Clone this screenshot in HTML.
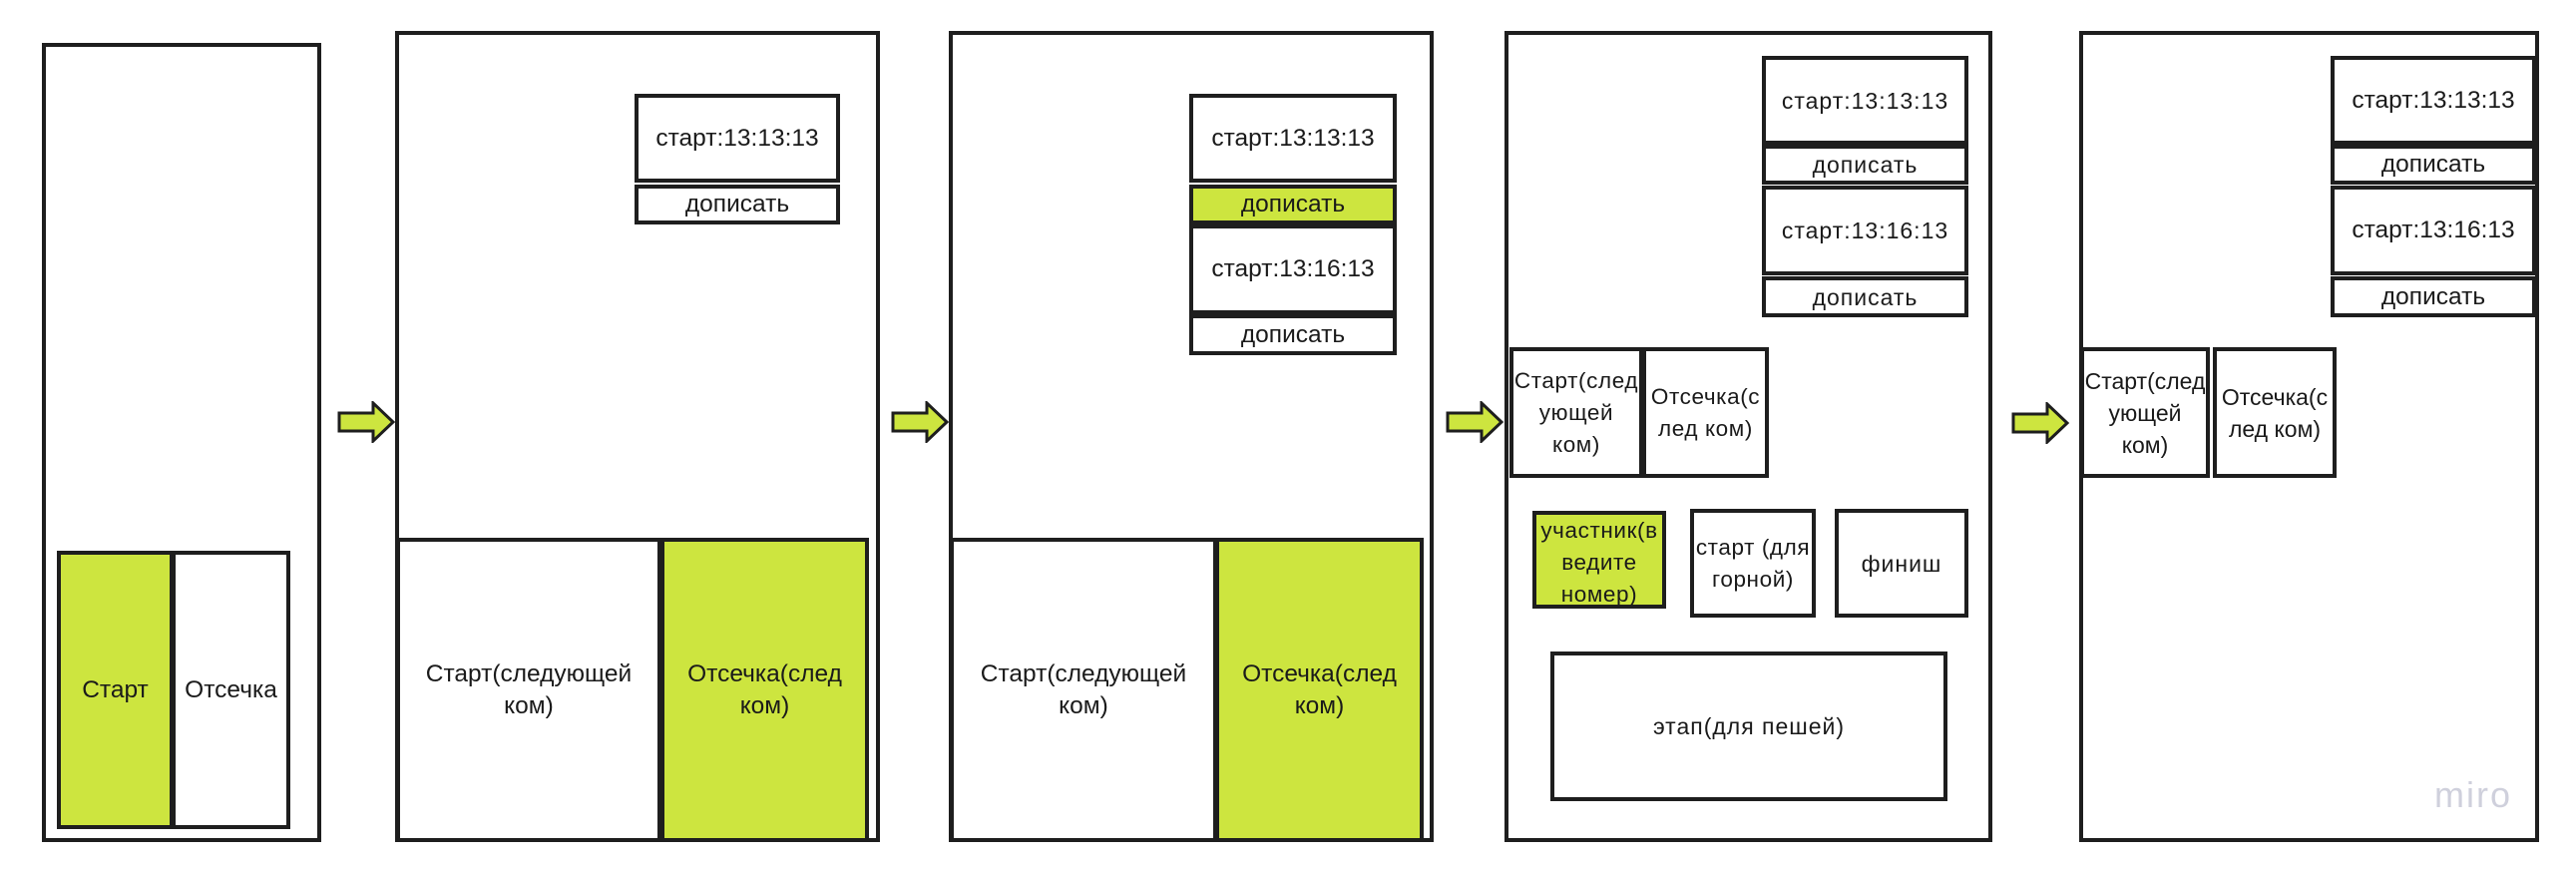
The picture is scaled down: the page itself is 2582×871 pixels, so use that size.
<!DOCTYPE html>
<html><head><meta charset="utf-8"><style>
html,body{margin:0;padding:0;background:#fff;}
body{width:2582px;height:871px;position:relative;overflow:hidden;font-family:"Liberation Sans","DejaVu Sans",sans-serif;color:#1a1a1a;}
.b{position:absolute;box-sizing:border-box;border:4px solid #1e1e1e;background:#fff;display:flex;align-items:center;justify-content:center;text-align:center;font-size:24.5px;line-height:32px;overflow:hidden;white-space:nowrap;}
.g{background:#cde53f;}
.w{font-size:23px;letter-spacing:1px;}
.s{font-size:22.5px;letter-spacing:0.6px;}
svg{position:absolute;}
</style></head><body>
<div class="b" style="left:42px;top:43px;width:280px;height:801px"></div>
<div class="b g" style="left:57px;top:552px;width:117px;height:279px">Старт</div>
<div class="b" style="left:172px;top:552px;width:119px;height:279px">Отсечка</div>

<svg style="left:338px;top:402px" width="60" height="42" viewBox="0 0 60 42"><polygon points="2,12 36,12 36,2 56,21 36,40 36,30 2,30" fill="#cde53f" stroke="#1e1e1e" stroke-width="3"/></svg>

<div class="b" style="left:396px;top:31px;width:486px;height:813px"></div>
<div class="b" style="left:636px;top:94px;width:206px;height:89px">старт:13:13:13</div>
<div class="b" style="left:636px;top:185px;width:206px;height:40px">дописать</div>
<div class="b" style="left:397px;top:539px;width:266px;height:305px">Старт(следующей<br>ком)</div>
<div class="b g" style="left:662px;top:539px;width:209px;height:305px">Отсечка(след<br>ком)</div>

<svg style="left:893px;top:402px" width="60" height="42" viewBox="0 0 60 42"><polygon points="2,12 36,12 36,2 56,21 36,40 36,30 2,30" fill="#cde53f" stroke="#1e1e1e" stroke-width="3"/></svg>

<div class="b" style="left:951px;top:31px;width:486px;height:813px"></div>
<div class="b" style="left:1192px;top:94px;width:208px;height:89px">старт:13:13:13</div>
<div class="b g" style="left:1192px;top:185px;width:208px;height:40px">дописать</div>
<div class="b" style="left:1192px;top:225px;width:208px;height:90px">старт:13:16:13</div>
<div class="b" style="left:1192px;top:315px;width:208px;height:41px">дописать</div>
<div class="b" style="left:952px;top:539px;width:268px;height:305px">Старт(следующей<br>ком)</div>
<div class="b g" style="left:1218px;top:539px;width:209px;height:305px">Отсечка(след<br>ком)</div>

<svg style="left:1449px;top:402px" width="60" height="42" viewBox="0 0 60 42"><polygon points="2,12 36,12 36,2 56,21 36,40 36,30 2,30" fill="#cde53f" stroke="#1e1e1e" stroke-width="3"/></svg>

<div class="b" style="left:1508px;top:31px;width:489px;height:813px"></div>
<div class="b w" style="left:1766px;top:56px;width:207px;height:89px">старт:13:13:13</div>
<div class="b w" style="left:1766px;top:145px;width:207px;height:40px">дописать</div>
<div class="b w" style="left:1766px;top:186px;width:207px;height:90px">старт:13:16:13</div>
<div class="b w" style="left:1766px;top:277px;width:207px;height:41px">дописать</div>
<div class="b s" style="left:1513px;top:348px;width:134px;height:131px">Старт(след<br>ующей<br>ком)</div>
<div class="b s" style="left:1646px;top:348px;width:127px;height:131px">Отсечка(с<br>лед ком)</div>
<div class="b g s" style="left:1536px;top:512px;width:134px;height:98px;align-items:flex-start">участник(в<br>ведите<br>номер)</div>
<div class="b s" style="left:1694px;top:510px;width:126px;height:109px">старт (для<br>горной)</div>
<div class="b w" style="left:1839px;top:510px;width:134px;height:109px">финиш</div>
<div class="b w" style="left:1554px;top:653px;width:398px;height:150px">этап(для пешей)</div>

<svg style="left:2016px;top:403px" width="60" height="42" viewBox="0 0 60 42"><polygon points="2,12 36,12 36,2 56,21 36,40 36,30 2,30" fill="#cde53f" stroke="#1e1e1e" stroke-width="3"/></svg>

<div class="b" style="left:2084px;top:31px;width:461px;height:813px"></div>
<div class="b" style="left:2336px;top:56px;width:206px;height:89px">старт:13:13:13</div>
<div class="b" style="left:2336px;top:145px;width:206px;height:40px">дописать</div>
<div class="b" style="left:2336px;top:186px;width:206px;height:90px">старт:13:16:13</div>
<div class="b" style="left:2336px;top:277px;width:206px;height:41px">дописать</div>
<div class="b" style="left:2085px;top:348px;width:130px;height:131px;font-size:23px">Старт(след<br>ующей<br>ком)</div>
<div class="b" style="left:2218px;top:348px;width:124px;height:131px;font-size:23px">Отсечка(с<br>лед ком)</div>

<div style="position:absolute;left:2440px;top:776px;font-size:36px;color:#cfd0dc;letter-spacing:2px;font-family:'Liberation Sans',sans-serif;">miro</div>
</body></html>
